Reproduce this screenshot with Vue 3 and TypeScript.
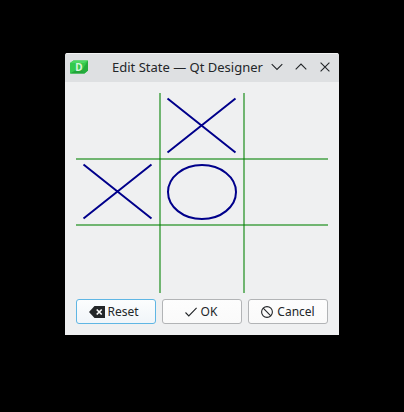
<script setup lang="ts">
import { ref } from 'vue'

type Mark = 'X' | 'O' | '-'

const initial = '-X-XO----'
const state = ref<Mark[]>(initial.split('') as Mark[])
const turn = ref<Mark>('X')

const cellWidth = 84
const cellHeight = 66

function originX(index: number): number {
  return (index % 3) * cellWidth
}

function originY(index: number): number {
  return Math.floor(index / 3) * cellHeight
}

function play(index: number): void {
  if (state.value[index] !== '-') return
  state.value[index] = turn.value
  turn.value = turn.value === 'X' ? 'O' : 'X'
}

function reset(): void {
  state.value = Array<Mark>(9).fill('-')
  turn.value = 'X'
}
</script>

<template>
  <main class="desktop">
    <section class="window">
      <header class="titlebar">
        <svg class="logo" width="18" height="14" viewBox="0 0 18 14">
          <path d="M3.5 .5H18V10.5L14.5 13.5H0V3Z" fill="#34c94d" />
          <path d="M3.5 .5H18L14 3H0V3Z" fill="#4bd862" />
          <path d="M18 .5V10.5L14.5 13.5L12 10Z" fill="#24ad3d" />
          <path d="M0 13.5L6 10L12 10L14.5 13.5Z" fill="#22a53a" />
          <text x="9" y="11" class="logo-letter">D</text>
        </svg>
        <h1 class="title">Edit State — Qt Designer</h1>
        <div class="controls">
          <svg width="12" height="12" viewBox="0 0 12 12"><path d="M.7 3.2 6 8.5l5.3-5.3" /></svg>
          <svg width="12" height="12" viewBox="0 0 12 12"><path d="M.7 8.4 6 3.1l5.3 5.3" /></svg>
          <svg width="12" height="12" viewBox="0 0 12 12"><path d="m1.6 1.6 8.8 8.8m0-8.8-8.8 8.8" /></svg>
        </div>
      </header>

      <div class="content">
        <svg class="board" width="252" height="200" viewBox="0 0 252 200">
          <g class="grid">
            <path d="M84 0V200" />
            <path d="M168 0V200" />
            <path d="M0 66H252" />
            <path d="M0 132H252" />
          </g>
          <g
            v-for="(mark, i) in state"
            :key="i"
            :transform="`translate(${originX(i)} ${originY(i)})`"
            @click="play(i)"
          >
            <rect :width="cellWidth" :height="cellHeight" fill="transparent" />
            <path v-if="mark === 'X'" class="mark" d="M7.5 5.5 75.5 59.5M75.5 5.5 7.5 59.5" />
            <ellipse v-else-if="mark === 'O'" class="mark" cx="42" cy="33" rx="34" ry="27" />
          </g>
        </svg>

        <footer class="buttons">
          <button class="button focused" type="button" @click="reset">
            <svg class="reset-icon" width="16" height="12" viewBox="0 0 16 12">
              <path d="M5.5 0H16V12H5.5L0 6Z" fill="#232629" />
              <path d="m7.7 3.5 5 5m0-5-5 5" fill="none" stroke="#fcfcfc" stroke-width="1.7" />
            </svg>
            <span>Reset</span>
          </button>
          <button class="button confirm" type="button">
            <svg class="ok-icon" width="12" height="10" viewBox="0 0 12 10">
              <path d="m.5 5.5 3.3 3.4L11.6.8" fill="none" stroke="#232629" stroke-width="1.1" />
            </svg>
            <span>OK</span>
          </button>
          <button class="button" type="button">
            <svg class="cancel-icon" width="12" height="12" viewBox="0 0 12 12">
              <circle cx="6" cy="6" r="5.4" fill="none" stroke="#232629" stroke-width="1.1" />
              <path d="m2.2 2.2 7.6 7.6" fill="none" stroke="#232629" stroke-width="1.1" />
            </svg>
            <span>Cancel</span>
          </button>
        </footer>
      </div>
    </section>
  </main>
</template>

<style>
body {
  margin: 0;
  background: #000;
}
</style>

<style scoped>
.desktop {
  box-sizing: border-box;
  width: 404px;
  height: 412px;
  padding: 53px 65px 77px;
  background: #000;
  font-family: 'Noto Sans', sans-serif;
  color: #232629;
}

.window {
  width: 274px;
  height: 282px;
  overflow: hidden;
  border-radius: 3px 3px 0 0;
  background: #eff0f1;
}

.titlebar {
  box-sizing: border-box;
  display: flex;
  align-items: center;
  height: 29px;
  padding: 0 8px 2px 5px;
  border-top: 1px solid #f2f3f3;
  background: #dee0e2;
}

.logo-letter {
  font: bold 10px 'Noto Sans', sans-serif;
  text-anchor: middle;
  fill: #d9f5dd;
}

.title {
  margin: 0 0 0 24px;
  font-size: 13px;
  font-weight: 400;
  line-height: 18px;
  white-space: nowrap;
}

.controls {
  display: flex;
  gap: 12px;
  margin-left: auto;
}

.controls path {
  fill: none;
  stroke: #232629;
  stroke-width: 1.1;
}

.content {
  display: flex;
  flex-direction: column;
  gap: 6px;
  padding: 11px;
}

.board {
  display: block;
}

.grid {
  stroke: #008000;
  stroke-opacity: 0.53;
  stroke-width: 2;
}

.mark {
  fill: none;
  stroke: #00008b;
  stroke-width: 2;
}

.buttons {
  display: flex;
  gap: 6px;
}

.button {
  box-sizing: border-box;
  display: flex;
  align-items: center;
  justify-content: center;
  gap: 4px;
  width: 80px;
  height: 25px;
  padding: 0;
  border: 1px solid #b2b4b6;
  border-radius: 3px;
  background: linear-gradient(#fdfdfd, #fafafa);
  font: 12px/16px 'Noto Sans', sans-serif;
  color: #232629;
}

.focused {
  gap: 2px;
  padding-right: 4px;
  border-color: #5fb6e4;
  background: linear-gradient(#fcfdfe, #f0f5f9);
}

.confirm {
  padding-right: 2px;
}
</style>
